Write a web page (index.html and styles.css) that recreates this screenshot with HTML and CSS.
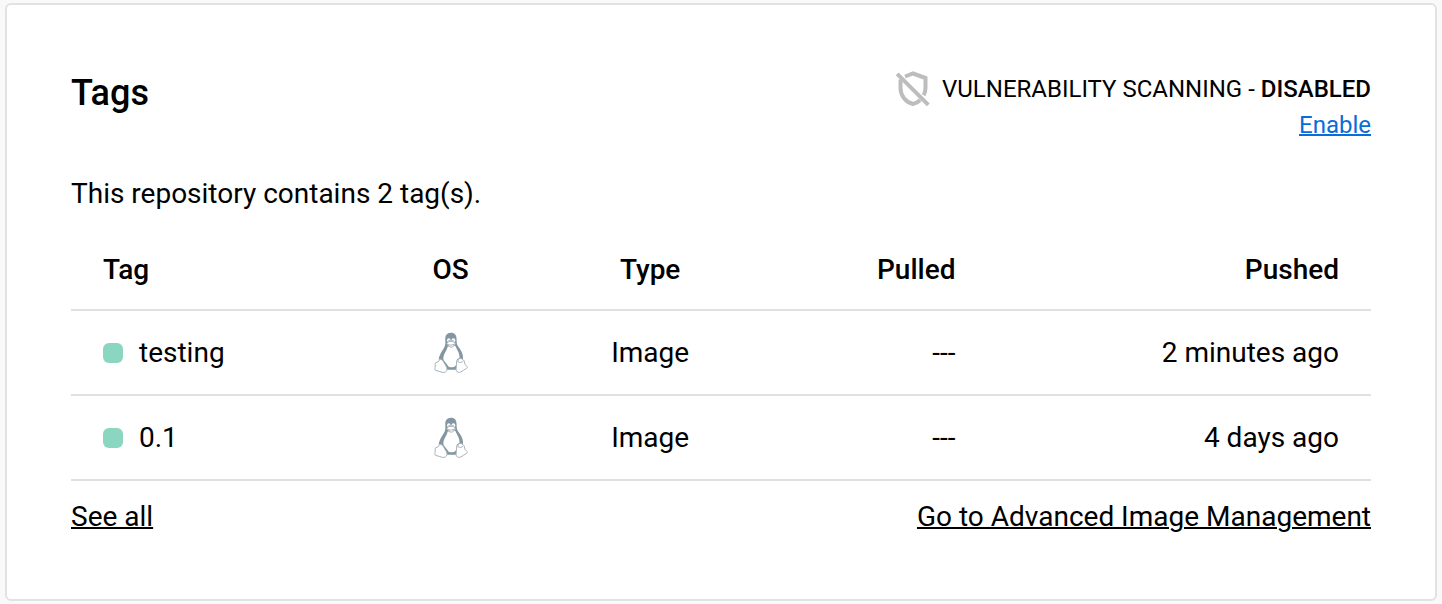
FILE: index.html
```html
<!DOCTYPE html>
<html lang="en">
<head>
<meta charset="utf-8">
<title>Tags</title>
<link rel="stylesheet" href="styles.css">
</head>
<body>
<svg class="sprite" aria-hidden="true">
  <symbol id="linux" viewBox="0 0 34 42">
    <path class="fur" d="M17 .8c-4.300 0-5.900 3-5.700 6.700.100 4 .300 6-1.800 9.200C7.400 20 4.900 24 4.600 27.800c2-.700 4 .200 5.400 2.700 1.200 2.200 2.800 4.200 2.600 7.300h9.600c-.400-3 .400-6 .800-9 1.500-2 4.700-2 5.800-.300 1-5.500-1.400-10-4.100-13.300-2.200-2.600-2-5-2.100-8C22.500 3.300 21 .8 17 .8z"/>
    <path class="belly" d="M13.800 14.500c-1 4-4.300 7.500-4.500 11.500 0 2 .600 2.500 1.400 3.500l3.500 4.500c.3 1.200 1.300 1.300 3.300 1.300 2.300 0 3.900-.500 4.500-2.300.3-2 .200-4 1-5.400.7-1 1.900-1.200 2.500-1.900.3-4.500-2.400-7.700-4.300-11.900z"/>
    <ellipse class="belly" cx="14.800" cy="8.300" rx="1.700" ry="2.100"/>
    <ellipse class="belly" cx="19.400" cy="8.300" rx="1.900" ry="2.100"/>
    <circle class="fur" cx="15.200" cy="8.600" r=".7"/>
    <circle class="fur" cx="19" cy="8.600" r=".7"/>
    <path class="outline" d="M12.800 11.200c1.500-1.600 2.800-2 4.200-2s3 .800 4.400 1.800c0 1.500-2.400 4.200-4.200 4.200s-3.600-2-4.400-4z"/>
    <path class="outline" d="M13.200 12.200c2.400 1.300 4.800 1.200 7.600-.200"/>
    <path class="outline" d="M6.300 27.400c1.700 0 2.600 1.500 3.800 3.500 1.300 2.300 3.100 4.400 2.900 6.500-.300 2.500-2.200 3.200-4.500 3-2.300-.400-4.300-1.700-6.700-2-1.300-.300-1-1.700-.700-3 .400-1.700-.300-3.500.500-4.600.600-.700 2-.400 2.800-1.100.700-.800.900-2.300 1.900-2.300z"/>
    <path class="outline" d="M23.400 28.500c.8 1.500 1.800 2.200 3.300 1.900 1.700-.3 2.500-1.400 3-2 1 .7.600 2.600 1.300 3.800.5 1.300 2.200 2 2.300 3.200-.3 1.500-3.500 2.200-5.300 3.800-1.600 1.300-3.300 1.600-4.700.7-1.700-1.100-1.100-3.400-.9-5.400.2-2.300-.1-4.500 1-6z"/>
    <path class="outline" d="M24.500 28.500c-.500-1.800 1.700-2.700 3.500-1.600.800.500 1.300 1 1.700 1.500"/>
  </symbol>
</svg>
<main class="card">
  <header class="card-header">
    <h1 class="title">Tags</h1>
    <div class="scanning">
      <div class="scanning-status">
        <svg class="shield" viewBox="0 0 34 36" aria-hidden="true">
          <path d="M9 5.500 17 2.500 29.500 7v10c0 2.700-.600 5-1.800 7.300"/>
          <path d="M4.500 8.500V17c0 7.600 5.200 14.200 12.500 16 2.800-.700 5.200-2 7.200-4"/>
          <path d="M1.200 2.800 32.300 33.800"/>
        </svg>
        <span>VULNERABILITY SCANNING - <strong class="state">DISABLED</strong></span>
      </div>
      <a class="enable" href="#enable">Enable</a>
    </div>
  </header>
  <p class="summary">This repository contains 2 tag(s).</p>
  <table class="tags">
    <thead>
      <tr><th class="col-tag">Tag</th><th class="col-os">OS</th><th class="col-type">Type</th><th class="col-pulled">Pulled</th><th class="col-pushed">Pushed</th></tr>
    </thead>
    <tbody>
      <tr>
        <td class="col-tag"><span class="tag"><i class="dot"></i>testing</span></td>
        <td class="col-os"><svg class="penguin" role="img" aria-label="Linux"><use href="#linux"/></svg></td>
        <td class="col-type">Image</td>
        <td class="col-pulled">---</td>
        <td class="col-pushed">2 minutes ago</td>
      </tr>
      <tr>
        <td class="col-tag"><span class="tag"><i class="dot"></i>0.1</span></td>
        <td class="col-os"><svg class="penguin" role="img" aria-label="Linux"><use href="#linux"/></svg></td>
        <td class="col-type">Image</td>
        <td class="col-pulled">---</td>
        <td class="col-pushed">4 days ago</td>
      </tr>
    </tbody>
  </table>
  <footer class="links">
    <a href="#tags">See all</a>
    <a href="#manage">Go to Advanced Image Management</a>
  </footer>
</main>
</body>
</html>
```
FILE: styles.css
```css
* { box-sizing: border-box; }
body {
  margin: 0;
  padding: 3px 5px 2px;
  background: #f9f9fa;
  color: #000;
  font: 28px/40px Roboto, "Liberation Sans", sans-serif;
}
.sprite { position: absolute; width: 0; height: 0; }
.card {
  padding: 64px 64px 62px;
  border: 2px solid #e1e2e6;
  border-radius: 6px;
  background: #fff;
}
.card-header { display: flex; justify-content: space-between; }
.title { margin: 0; font-size: 36px; line-height: 48px; font-weight: 500; }
.scanning {
  display: flex;
  flex-direction: column;
  align-items: flex-end;
  padding-top: 2px;
  font-size: 24px;
  line-height: 36px;
}
.scanning-status { display: flex; align-items: center; gap: 12px; }
.shield { width: 34px; height: 36px; fill: none; stroke: #bdbdbd; stroke-width: 4; }
.state { font-weight: 500; }
.enable { color: #086dd7; text-decoration-thickness: 2px; }
.summary { margin: 31px 0 16px; }
.tags { width: 100%; border-collapse: collapse; table-layout: fixed; }
.tags th { height: 80px; font-weight: 500; }
.tags td { height: 85px; }
.tags th, .tags td { padding: 0 32px; border-bottom: 2px solid #e0e0e0; }
.tags .col-tag { width: 25%; text-align: left; }
.tags .col-os { width: 8.4%; padding: 0; text-align: center; }
.tags .col-type { width: 22.3%; text-align: center; }
.tags .col-pulled { width: 14.8%; text-align: right; }
.tags .col-pushed { width: 29.5%; text-align: right; }
.tag { display: flex; align-items: center; gap: 16px; }
.dot { width: 20px; height: 20px; border-radius: 6px; background: #8ad6c0; }
.penguin { display: block; width: 34px; height: 42px; margin: 0 auto; }
.fur { fill: #8496a1; }
.belly { fill: #fff; }
.outline { fill: #fff; stroke: #a5b1b9; stroke-width: 1; }
.links { display: flex; justify-content: space-between; margin-top: 16px; }
.links a { color: #000; text-decoration-thickness: 2px; }
```
